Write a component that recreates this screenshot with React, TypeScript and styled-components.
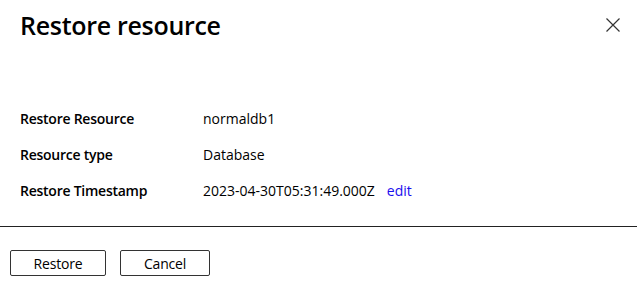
import React from "react";
import styled, { createGlobalStyle } from "styled-components";

const Global = createGlobalStyle`
  html, body { margin: 0; padding: 0; background: #fff; }
  body { font-family: "Segoe UI", "Open Sans", "Noto Sans", sans-serif; color: #000; }
`;

const Panel = styled.div`
  width: 637px;
  height: 285px;
  display: flex;
  flex-direction: column;
  box-sizing: border-box;
`;

const Header = styled.div`
  display: flex;
  justify-content: space-between;
  align-items: flex-start;
  padding: 7px 16px 0 20px;
  height: 109px;
  box-sizing: border-box;
`;

const Title = styled.h1`
  margin: 0;
  font-size: 25px;
  font-weight: 600;
  line-height: 36px;
  letter-spacing: -0.3px;
`;

const CloseButton = styled.button`
  border: none;
  background: none;
  padding: 0;
  margin-top: 10px;
  width: 16px;
  height: 16px;
  display: flex;
  align-items: center;
  justify-content: center;
  cursor: pointer;
`;

const Details = styled.div`
  display: grid;
  grid-template-columns: 183px auto;
  row-gap: 17px;
  padding: 0 20px;
  font-size: 14px;
  line-height: 19px;
`;

const Label = styled.div`
  font-weight: 600;
  letter-spacing: -0.25px;
`;

const Value = styled.div`
  display: flex;
  gap: 12px;
`;

const EditLink = styled.a`
  color: #1a0dee;
  text-decoration: none;
  cursor: pointer;
`;

const Divider = styled.hr`
  margin: 26px 0 0;
  border: none;
  border-top: 1px solid #222;
  width: 100%;
`;

const Footer = styled.div`
  display: flex;
  gap: 14px;
  padding: 23px 10px 0;
`;

const Button = styled.button<{ $w: number }>`
  width: ${(p) => p.$w}px;
  height: 26px;
  border: 1px solid #333;
  border-radius: 2px;
  background: #fff;
  font-family: inherit;
  font-size: 14px;
  color: #000;
  padding: 0;
  letter-spacing: -0.2px;
  cursor: pointer;
`;

export default function App() {
  return (
    <>
      <Global />
      <Panel>
        <Header>
          <Title>Restore resource</Title>
          <CloseButton aria-label="Close">
            <svg width="14" height="14" viewBox="0 0 14 14">
              <path d="M0.5 0.5 L13.5 13.5 M13.5 0.5 L0.5 13.5" stroke="#333" strokeWidth="1.2" fill="none" />
            </svg>
          </CloseButton>
        </Header>
        <Details>
          <Label>Restore Resource</Label>
          <Value>normaldb1</Value>
          <Label>Resource type</Label>
          <Value>Database</Value>
          <Label>Restore Timestamp</Label>
          <Value>
            <span>2023-04-30T05:31:49.000Z</span>
            <EditLink>edit</EditLink>
          </Value>
        </Details>
        <Divider />
        <Footer>
          <Button $w={96}>Restore</Button>
          <Button $w={90}>Cancel</Button>
        </Footer>
      </Panel>
    </>
  );
}
